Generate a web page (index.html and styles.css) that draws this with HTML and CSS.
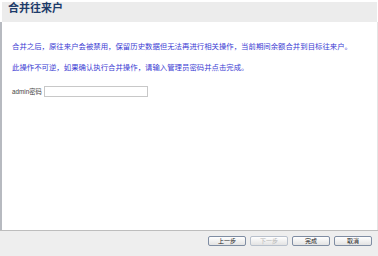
FILE: index.html
```html
<!DOCTYPE html>
<html>
<head>
  <meta charset="utf-8">
  <title>合并往来户</title>
  <link rel="stylesheet" href="styles.css">
</head>
<body>
  <div class="dialog">
    <div class="dialog-header">
      <h1>合并往来户</h1>
    </div>
    <div class="dialog-body">
      <p class="note">合并之后，原往来户会被禁用，保留历史数据但无法再进行相关操作，当前期间余额合并到目标往来户。</p>
      <p class="note">此操作不可逆，如果确认执行合并操作，请输入管理员密码并点击完成。</p>
      <div class="field">
        <label for="admin-pwd">admin密码</label>
        <input type="password" id="admin-pwd">
      </div>
    </div>
    <div class="dialog-footer">
      <button class="wiz-button">上一步</button>
      <button class="wiz-button" disabled>下一步</button>
      <button class="wiz-button">完成</button>
      <button class="wiz-button">取消</button>
    </div>
  </div>
</body>
</html>
```

FILE: styles.css
```css
body {
  margin: 0;
  padding: 0;
  background: #ffffff;
  font-family: "Liberation Sans", "Noto Sans CJK SC", sans-serif;
}

.dialog {
  height: 256px;
  padding-top: 2px;
  box-sizing: border-box;
  display: flex;
  flex-direction: column;
}

.dialog-header {
  height: 20px;
  margin-left: 2px;
  margin-right: 1px;
  background: #ececec;
}

.dialog-header h1 {
  margin: 0;
  padding-left: 6px;
  font-family: "Noto Sans CJK SC", sans-serif;
  font-size: 11px;
  line-height: 10px;
  font-weight: bold;
  color: #1d3b6a;
}

.dialog-body {
  flex: 1;
  border-left: 2px solid #b7bac0;
  border-right: 1px solid #e4e4e4;
  padding: 19px 0 0 10px;
}

.note {
  margin: 0 0 11px 0;
  font-family: "Noto Sans CJK SC", sans-serif;
  font-size: 7.4px;
  line-height: 10px;
  color: #3b3bd3;
}

.field {
  display: flex;
  align-items: center;
  margin-top: 14px;
}

.field label {
  width: 32px;
  font-size: 6.3px;
  color: #444444;
  font-family: "Liberation Sans", "Noto Sans CJK SC", sans-serif;
}

.field input {
  width: 104px;
  height: 11px;
  margin: 0;
  padding: 0;
  box-sizing: border-box;
  border: 1px solid #c8c8c8;
  background: #ffffff;
}

.dialog-footer {
  height: 20px;
  border-top: 1px solid #bdbdbd;
  background: #eeeeee;
  display: flex;
  justify-content: flex-end;
  align-items: flex-start;
  gap: 4px;
  padding: 5px 6px 0 0;
}

.wiz-button {
  width: 38px;
  height: 10px;
  padding: 0;
  border: 1px solid #7f8da3;
  border-radius: 2px;
  background: linear-gradient(#ffffff, #e3e3e3);
  font-family: "Noto Sans CJK SC", sans-serif;
  font-size: 6px;
  line-height: 8px;
  color: #222222;
}

.wiz-button:disabled {
  border-color: #b8c0cc;
  color: #b5b5b5;
}
```
